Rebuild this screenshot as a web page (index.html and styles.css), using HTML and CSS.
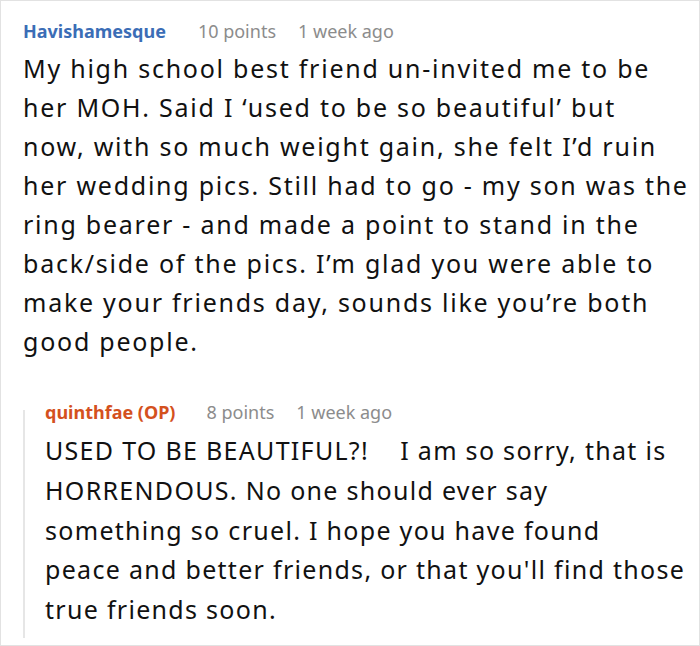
FILE: index.html
```html
<!DOCTYPE html>
<html>
<head>
<meta charset="utf-8">
<link rel="stylesheet" href="styles.css">
</head>
<body>
<div class="comment">
  <div class="meta">
    <span class="author">Havishamesque</span>
    <span class="info">10 points</span>
    <span class="info">1 week ago</span>
  </div>
  <p class="text">My high school best friend un-invited me to be<br>her MOH. Said I ‘used to be so beautiful’ but<br>now, with so much weight gain, she felt I’d ruin<br>her wedding pics. Still had to go - my son was the<br>ring bearer - and made a point to stand in the<br>back/side of the pics. I’m glad you were able to<br>make your friends day, sounds like you’re both<br>good people.</p>
  <div class="reply">
    <div class="thread-line"></div>
    <div class="reply-body">
      <div class="meta">
        <span class="author op">quinthfae (OP)</span>
        <span class="info">8 points</span>
        <span class="info">1 week ago</span>
      </div>
      <p class="text reply-text">USED TO BE BEAUTIFUL?!&nbsp;&nbsp;&nbsp;&nbsp;I am so sorry, that is<br>HORRENDOUS. No one should ever say<br>something so cruel. I hope you have found<br>peace and better friends, or that you'll find those<br>true friends soon.</p>
    </div>
  </div>
</div>
</body>
</html>
```
FILE: styles.css
```css
html, body {
  margin: 0;
  padding: 0;
  background: #fff;
}
body {
  font-family: "Noto Sans", "Open Sans", sans-serif;
  color: #111;
}
.comment {
  width: 700px;
  height: 646px;
  box-sizing: border-box;
  border: 1px solid #e2e2e2;
  padding: 18px 2px 0 22px;
  overflow: hidden;
}
.meta {
  display: flex;
  font-size: 18px;
  line-height: 24px;
}
.author {
  font-weight: 700;
  color: #3b6db6;
  margin-right: 32px;
}
.author.op {
  color: #d4511e;
  margin-right: 31px;
}
.info {
  color: #8c8c8c;
  margin-right: 22px;
}
.text {
  margin: 6px 0 0 0;
  font-size: 25px;
  letter-spacing: 1.75px;
  line-height: 39px;
  white-space: nowrap;
}
.reply {
  display: flex;
  margin-top: 39px;
}
.thread-line {
  width: 2px;
  flex: none;
  background: #e6e6e6;
  margin-top: 10px;
}
.reply-body {
  flex: 1;
  padding-left: 20px;
  padding-bottom: 8px;
}
.reply-text {
  margin-top: 7px;
  line-height: 39.75px;
  letter-spacing: 1.3px;
}
```
